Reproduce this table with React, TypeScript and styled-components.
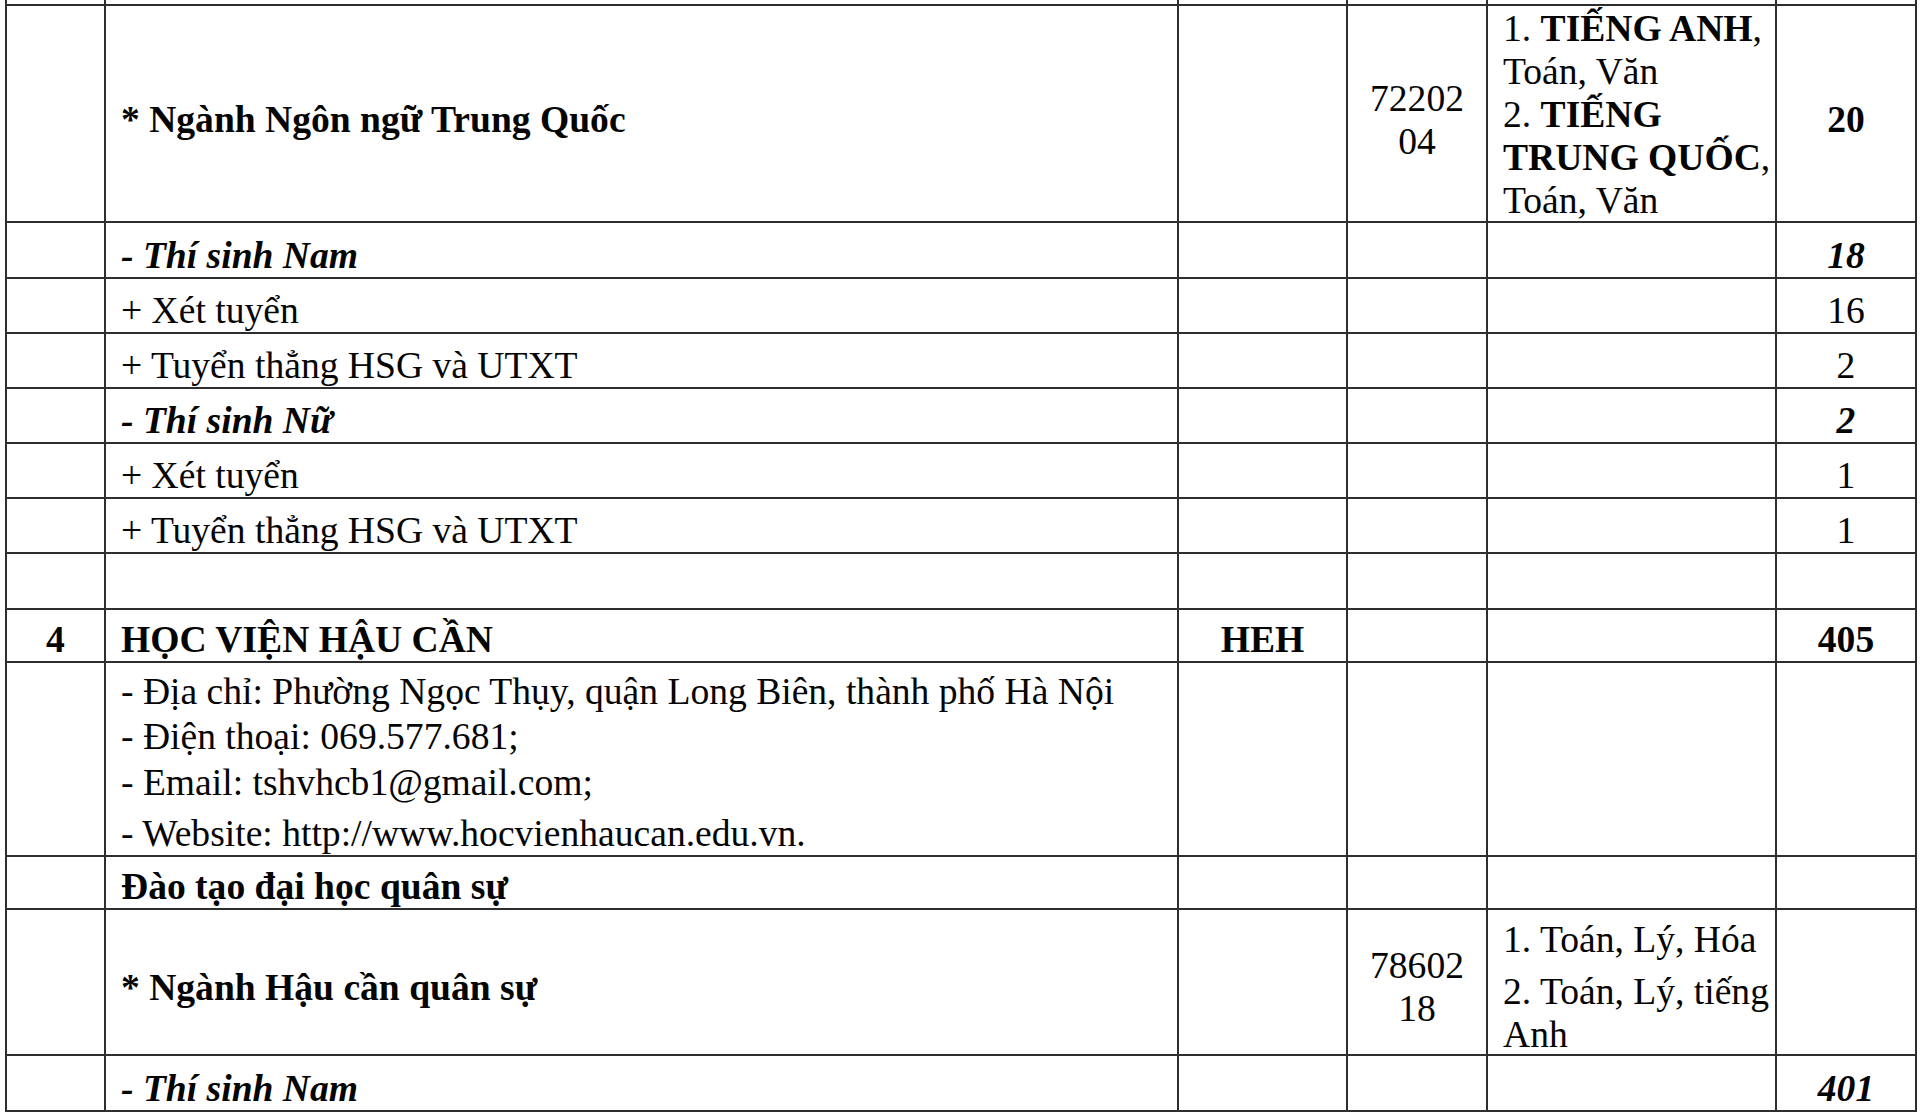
import React from 'react';
import styled, { createGlobalStyle } from 'styled-components';

const Global = createGlobalStyle`
  html, body { margin: 0; padding: 0; background: #ffffff; }
  body { font-family: "Liberation Serif", "Times New Roman", serif; color: #050505; }
`;

const Page = styled.div`
  width: 1920px;
  height: 1113px;
  overflow: hidden;
  padding-left: 5px;
  box-sizing: border-box;
`;

const Sheet = styled.table`
  border-collapse: collapse;
  table-layout: fixed;
  width: 1912px;
  font-size: 37.6px;
  line-height: 43px;
`;

const Row = styled.tr<{ $h: number }>`
  height: ${(p) => p.$h}px;
`;

type CellProps = {
  $align?: 'left' | 'center';
  $pt?: number;
  $valign?: 'top' | 'middle';
  $bold?: boolean;
  $italic?: boolean;
  $stub?: boolean;
};

const Cell = styled.td<CellProps>`
  border: 2px solid #2e2e2e;
  ${(p) => (p.$stub ? 'border-top: none; font-size: 0; line-height: 0;' : '')}
  padding: ${(p) => (p.$stub ? 0 : p.$pt ?? 10)}px
    ${(p) => (p.$align === 'center' ? 2 : 4)}px 0
    ${(p) => (p.$align === 'center' ? 2 : 15)}px;
  text-align: ${(p) => p.$align ?? 'left'};
  vertical-align: ${(p) => p.$valign ?? 'middle'};
  font-weight: ${(p) => (p.$bold ? 700 : 400)};
  font-style: ${(p) => (p.$italic ? 'italic' : 'normal')};
  white-space: nowrap;
  overflow: visible;
`;

const Stack = styled.div<{ $pull?: number }>`
  display: flex;
  flex-direction: column;
  margin-bottom: ${(p) => -(p.$pull ?? 0)}px;
`;

const Line = styled.div<{ $gap?: number }>`
  margin-top: ${(p) => p.$gap ?? 0}px;
  white-space: nowrap;
`;

const Strong = styled.b`
  font-weight: 700;
`;

const Col = styled.col<{ $w: number }>`
  width: ${(p) => p.$w}px;
`;

const widths = [99, 1073, 169, 140, 289, 140];

type Sub = { label: string; value: string; head?: boolean };

const subRows = (rows: Sub[]) =>
  rows.map((r, i) => (
    <Row $h={i === 0 ? 56 : 55} key={r.label + i}>
      <Cell />
      <Cell $bold={r.head} $italic={r.head}>{r.label}</Cell>
      <Cell />
      <Cell />
      <Cell />
      <Cell $align="center" $bold={r.head} $italic={r.head}>{r.value}</Cell>
    </Row>
  ));

export default function App() {
  return (
    <Page>
      <Global />
      <Sheet>
        <colgroup>
          {widths.map((w, i) => (
            <Col $w={w} key={i} />
          ))}
        </colgroup>
        <tbody>
          <Row $h={5}>
            {widths.map((_, i) => (
              <Cell $stub key={i} />
            ))}
          </Row>
          <Row $h={217}>
            <Cell $pt={12} />
            <Cell $pt={12} $bold>* Ngành Ngôn ngữ Trung Quốc</Cell>
            <Cell $pt={12} />
            <Cell $pt={12} $align="center">
              <Stack>
                <Line>72202</Line>
                <Line>04</Line>
              </Stack>
            </Cell>
            <Cell $pt={1} $valign="top">
              <Stack $pull={1}>
                <Line>
                  1. <Strong>TIẾNG ANH</Strong>,
                </Line>
                <Line>Toán, Văn</Line>
                <Line>
                  2. <Strong>TIẾNG</Strong>
                </Line>
                <Line>
                  <Strong>TRUNG QUỐC</Strong>,
                </Line>
                <Line>Toán, Văn</Line>
              </Stack>
            </Cell>
            <Cell $pt={12} $align="center" $bold>20</Cell>
          </Row>
          {subRows([
            { label: '- Thí sinh Nam', value: '18', head: true },
            { label: '+ Xét tuyển', value: '16' },
            { label: '+ Tuyển thẳng HSG và UTXT', value: '2' },
            { label: '- Thí sinh Nữ', value: '2', head: true },
            { label: '+ Xét tuyển', value: '1' },
            { label: '+ Tuyển thẳng HSG và UTXT', value: '1' },
          ])}
          <Row $h={56}>
            {widths.map((_, i) => (
              <Cell key={i} />
            ))}
          </Row>
          <Row $h={53}>
            <Cell $pt={8} $align="center" $bold>4</Cell>
            <Cell $pt={8} $bold>HỌC VIỆN HẬU CẦN</Cell>
            <Cell $pt={8} $align="center" $bold>HEH</Cell>
            <Cell $pt={8} />
            <Cell $pt={8} />
            <Cell $pt={8} $align="center" $bold>405</Cell>
          </Row>
          <Row $h={194}>
            <Cell />
            <Cell $pt={7} $valign="top">
              <Stack $pull={2}>
                <Line>- Địa chỉ: Phường Ngọc Thụy, quận Long Biên, thành phố Hà Nội</Line>
                <Line $gap={2}>- Điện thoại: 069.577.681;</Line>
                <Line $gap={3}>- Email: tshvhcb1@gmail.com;</Line>
                <Line $gap={8}>- Website: http://www.hocvienhaucan.edu.vn.</Line>
              </Stack>
            </Cell>
            <Cell />
            <Cell />
            <Cell />
            <Cell />
          </Row>
          <Row $h={53}>
            <Cell $pt={8} />
            <Cell $pt={8} $bold>Đào tạo đại học quân sự</Cell>
            <Cell $pt={8} />
            <Cell $pt={8} />
            <Cell $pt={8} />
            <Cell $pt={8} />
          </Row>
          <Row $h={146}>
            <Cell />
            <Cell $bold>* Ngành Hậu cần quân sự</Cell>
            <Cell />
            <Cell $align="center">
              <Stack>
                <Line>78602</Line>
                <Line>18</Line>
              </Stack>
            </Cell>
            <Cell $pt={8} $valign="top">
              <Stack $pull={4}>
                <Line>1. Toán, Lý, Hóa</Line>
                <Line $gap={9}>2. Toán, Lý, tiếng</Line>
                <Line>Anh</Line>
              </Stack>
            </Cell>
            <Cell />
          </Row>
          <Row $h={56}>
            <Cell />
            <Cell $bold $italic>- Thí sinh Nam</Cell>
            <Cell />
            <Cell />
            <Cell />
            <Cell $align="center" $bold $italic>401</Cell>
          </Row>
        </tbody>
      </Sheet>
    </Page>
  );
}
